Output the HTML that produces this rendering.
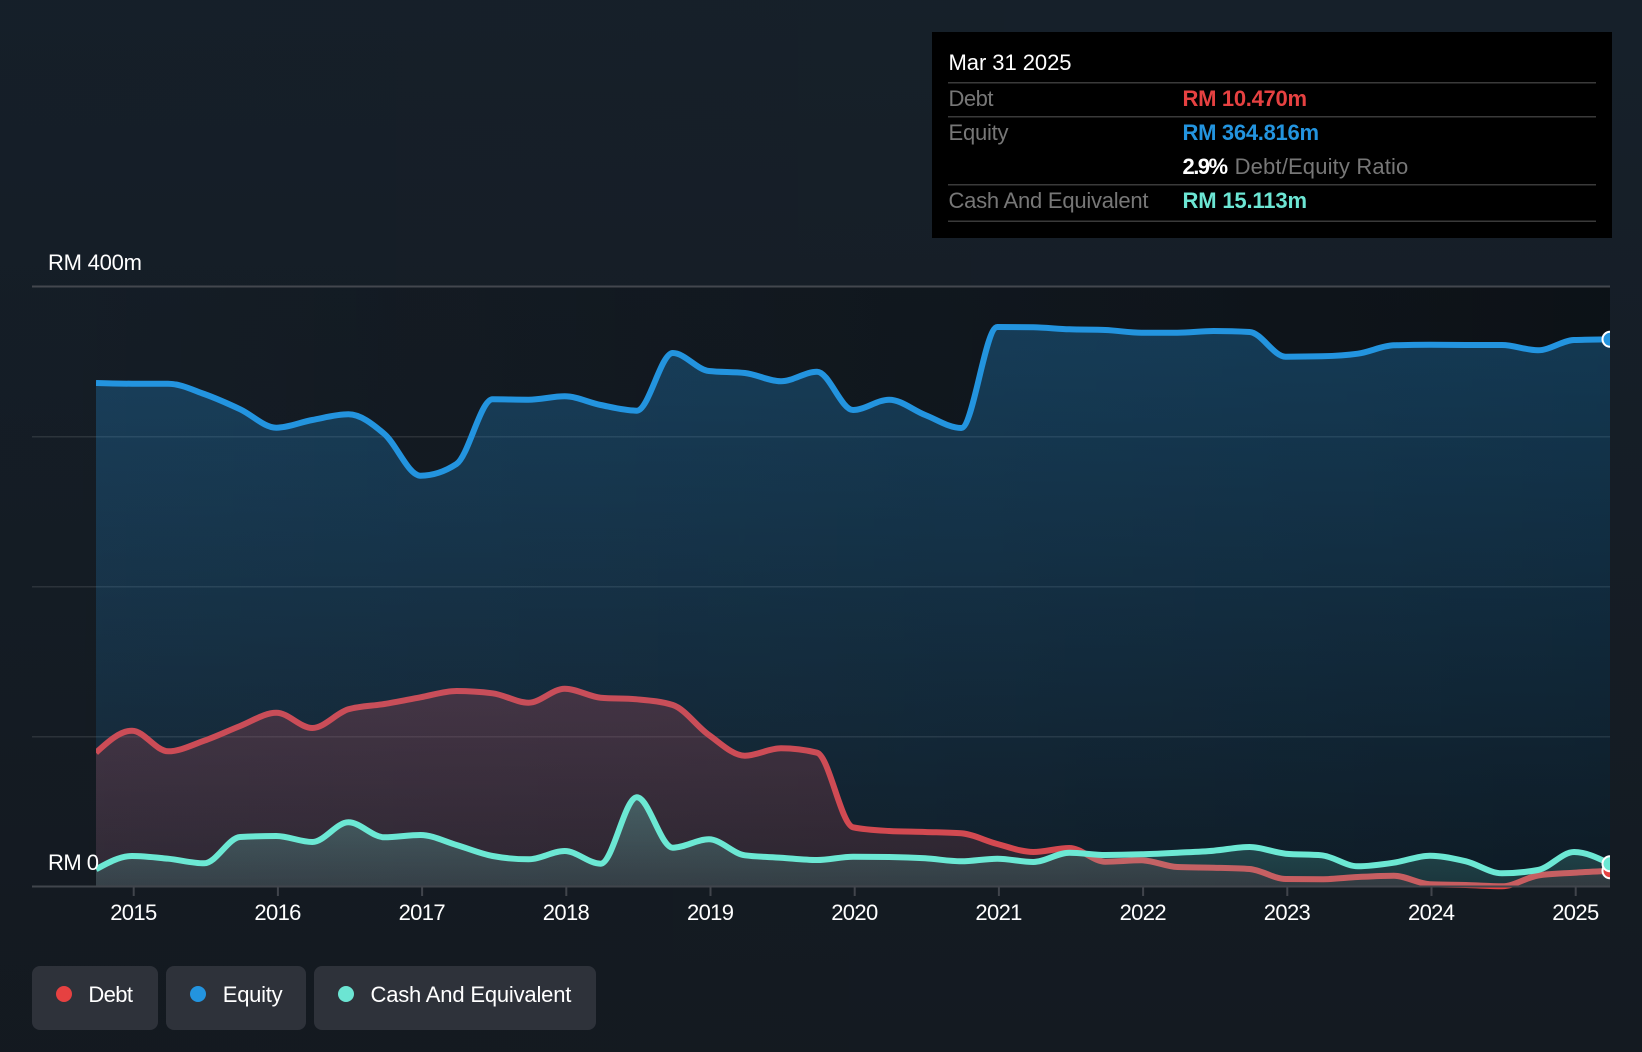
<!DOCTYPE html>
<html>
<head>
<meta charset="utf-8">
<title>Debt to Equity History</title>
<style>
html,body{margin:0;padding:0;width:1642px;height:1052px;overflow:hidden}
body{background:linear-gradient(90deg,rgba(0,0,0,.03),rgba(0,0,0,0)),linear-gradient(180deg,#16202a,#141a21)}
svg{display:block;position:absolute;left:0;top:0}
text{font-family:"Liberation Sans",Arial,sans-serif;font-size:22px}
</style>
</head>
<body>
<svg width="1642" height="1052" viewBox="0 0 1642 1052" xmlns="http://www.w3.org/2000/svg">
<defs>
<linearGradient id="plot" x1="0" y1="0" x2="1" y2="0"><stop offset="0" stop-color="#000" stop-opacity="0"/><stop offset="1" stop-color="#000" stop-opacity=".42"/></linearGradient>
<linearGradient id="ge" x1="0" y1="0" x2="0" y2="1"><stop offset="0" stop-color="#2394df" stop-opacity=".3"/><stop offset="1" stop-color="#2394df" stop-opacity=".08"/></linearGradient>
<linearGradient id="gd" x1="0" y1="0" x2="0" y2="1"><stop offset="0" stop-color="#e64141" stop-opacity=".26"/><stop offset="1" stop-color="#e64141" stop-opacity=".13"/></linearGradient>
<linearGradient id="gc" x1="0" y1="0" x2="0" y2="1"><stop offset="0" stop-color="#6ce5d3" stop-opacity=".27"/><stop offset="1" stop-color="#6ce5d3" stop-opacity=".13"/></linearGradient>
<clipPath id="clip"><rect x="96" y="280" width="1514" height="620"/></clipPath>
</defs>

<rect x="32" y="287" width="1578" height="600" fill="url(#plot)"/>
<rect x="32" y="285.5" width="1578" height="2" fill="#43474e"/>
<rect x="32" y="436" width="1578" height="1.5" fill="#fff" fill-opacity=".1"/>
<rect x="32" y="586" width="1578" height="1.5" fill="#fff" fill-opacity=".1"/>
<rect x="32" y="736" width="1578" height="1.5" fill="#fff" fill-opacity=".1"/>

<g clip-path="url(#clip)">
<path fill="url(#gd)" d="M96 752.7C108 741.7 120 730.7 132 730.7C144 730.7 156.1 751.3 168.1 751.3C180.1 751.3 192.2 744.9 204.2 740.7C216.2 736.5 228.2 730.7 240.2 726C252.2 721.3 264.3 712.7 276.3 712.7C288.3 712.7 300.3 728 312.3 728C324.3 728 336.4 712.8 348.4 709.3C360.4 705.8 372.4 706 384.4 704C396.4 702 408.5 699.5 420.5 697.3C432.5 695.1 444.5 691 456.5 691C468.5 691 480.6 691.8 492.6 693.3C504.6 694.8 516.6 702.7 528.6 702.7C540.6 702.7 552.7 688.7 564.7 688.7C576.7 688.7 588.7 696.6 600.7 697.7C612.7 698.8 624.8 698.2 636.8 699.3C648.8 700.4 660.8 701.2 672.8 705C684.8 708.8 696.9 726.6 708.9 735C720.9 743.5 732.9 755.7 744.9 755.7C756.9 755.7 769 748.3 781 748.3C793 748.3 805 749.8 817 752.7C829 755.6 841.1 824.8 853.1 827.3C865.1 829.8 877.1 830.3 889.1 831C901.1 831.7 913.2 831.6 925.2 832C937.2 832.4 949.2 832.4 961.2 833.3C973.2 834.2 985.3 840.9 997.3 844C1009.3 847.1 1021.3 852 1033.3 852C1045.3 852 1057.4 848 1069.4 848C1081.4 848 1093.4 861.7 1105.4 861.7C1117.4 861.7 1129.5 860.3 1141.5 860.3C1153.5 860.3 1165.5 866.5 1177.5 867C1189.5 867.5 1201.6 867.4 1213.6 867.7C1225.6 868 1237.6 868.1 1249.6 869C1261.6 869.9 1273.7 878.8 1285.7 879C1297.7 879.2 1309.7 879.3 1321.7 879.3C1333.7 879.3 1345.8 877.6 1357.8 877C1369.8 876.4 1381.8 875.7 1393.8 875.7C1405.8 875.7 1417.9 883.8 1429.9 884.3C1441.9 884.8 1453.9 884.7 1465.9 885C1477.9 885.3 1490 886.3 1502 886.3C1514 886.3 1526 877.4 1538 875.5C1550 873.6 1562.1 873.5 1574.1 872.7C1586.1 871.9 1598 871.4 1610 870.8L1610 886.5L96 886.5Z"/>
<path fill="none" stroke="#e64141" stroke-width="6" stroke-linejoin="round" d="M96 752.7C108 741.7 120 730.7 132 730.7C144 730.7 156.1 751.3 168.1 751.3C180.1 751.3 192.2 744.9 204.2 740.7C216.2 736.5 228.2 730.7 240.2 726C252.2 721.3 264.3 712.7 276.3 712.7C288.3 712.7 300.3 728 312.3 728C324.3 728 336.4 712.8 348.4 709.3C360.4 705.8 372.4 706 384.4 704C396.4 702 408.5 699.5 420.5 697.3C432.5 695.1 444.5 691 456.5 691C468.5 691 480.6 691.8 492.6 693.3C504.6 694.8 516.6 702.7 528.6 702.7C540.6 702.7 552.7 688.7 564.7 688.7C576.7 688.7 588.7 696.6 600.7 697.7C612.7 698.8 624.8 698.2 636.8 699.3C648.8 700.4 660.8 701.2 672.8 705C684.8 708.8 696.9 726.6 708.9 735C720.9 743.5 732.9 755.7 744.9 755.7C756.9 755.7 769 748.3 781 748.3C793 748.3 805 749.8 817 752.7C829 755.6 841.1 824.8 853.1 827.3C865.1 829.8 877.1 830.3 889.1 831C901.1 831.7 913.2 831.6 925.2 832C937.2 832.4 949.2 832.4 961.2 833.3C973.2 834.2 985.3 840.9 997.3 844C1009.3 847.1 1021.3 852 1033.3 852C1045.3 852 1057.4 848 1069.4 848C1081.4 848 1093.4 861.7 1105.4 861.7C1117.4 861.7 1129.5 860.3 1141.5 860.3C1153.5 860.3 1165.5 866.5 1177.5 867C1189.5 867.5 1201.6 867.4 1213.6 867.7C1225.6 868 1237.6 868.1 1249.6 869C1261.6 869.9 1273.7 878.8 1285.7 879C1297.7 879.2 1309.7 879.3 1321.7 879.3C1333.7 879.3 1345.8 877.6 1357.8 877C1369.8 876.4 1381.8 875.7 1393.8 875.7C1405.8 875.7 1417.9 883.8 1429.9 884.3C1441.9 884.8 1453.9 884.7 1465.9 885C1477.9 885.3 1490 886.3 1502 886.3C1514 886.3 1526 877.4 1538 875.5C1550 873.6 1562.1 873.5 1574.1 872.7C1586.1 871.9 1598 871.4 1610 870.8"/>

<path fill="url(#ge)" d="M96 383C108 383.4 120 383.7 132 383.7C144 383.7 156.1 383.7 168.1 383.7C180.1 383.7 192.2 389.7 204.2 394C216.2 398.3 228.2 403.7 240.2 409.3C252.2 414.9 264.3 427.7 276.3 427.7C288.3 427.7 300.3 422.2 312.3 420C324.3 417.8 336.4 414.3 348.4 414.3C360.4 414.3 372.4 423.8 384.4 434C396.4 444.2 408.5 475.7 420.5 475.7C432.5 475.7 444.5 471.8 456.5 464C468.5 456.2 480.6 399.3 492.6 399.3C504.6 399.3 516.6 399.7 528.6 399.7C540.6 399.7 552.7 396.3 564.7 396.3C576.7 396.3 588.7 402.6 600.7 405C612.7 407.4 624.8 410.7 636.8 410.7C648.8 410.7 660.8 353 672.8 353C684.8 353 696.9 369.7 708.9 371C720.9 372.3 732.9 371.7 744.9 373C756.9 374.3 769 381.3 781 381.3C793 381.3 805 371.7 817 371.7C829 371.7 841.1 410 853.1 410C865.1 410 877.1 399.7 889.1 399.7C901.1 399.7 913.2 410.3 925.2 415C937.2 419.7 949.2 428 961.2 428C973.2 428 985.3 327 997.3 327C1009.3 327 1021.3 327.1 1033.3 327.3C1045.3 327.5 1057.4 328.9 1069.4 329.3C1081.4 329.8 1093.4 329.5 1105.4 330C1117.4 330.5 1129.5 332.7 1141.5 332.7C1153.5 332.7 1165.5 332.7 1177.5 332.7C1189.5 332.7 1201.6 331 1213.6 331C1225.6 331 1237.6 331.3 1249.6 332C1261.6 332.7 1273.7 356.7 1285.7 356.7C1297.7 356.7 1309.7 356.6 1321.7 356.3C1333.7 356 1345.8 355.4 1357.8 353.7C1369.8 352 1381.8 345.7 1393.8 345.3C1405.8 344.9 1417.9 344.7 1429.9 344.7C1441.9 344.7 1453.9 345 1465.9 345C1477.9 345 1490 345 1502 345C1514 345 1526 350.3 1538 350.3C1550 350.3 1562.1 340.5 1574.1 340C1586.1 339.5 1598 339.5 1610 339.3L1610 886.5L96 886.5Z"/>
<path fill="none" stroke="#2394df" stroke-width="6" stroke-linejoin="round" d="M96 383C108 383.4 120 383.7 132 383.7C144 383.7 156.1 383.7 168.1 383.7C180.1 383.7 192.2 389.7 204.2 394C216.2 398.3 228.2 403.7 240.2 409.3C252.2 414.9 264.3 427.7 276.3 427.7C288.3 427.7 300.3 422.2 312.3 420C324.3 417.8 336.4 414.3 348.4 414.3C360.4 414.3 372.4 423.8 384.4 434C396.4 444.2 408.5 475.7 420.5 475.7C432.5 475.7 444.5 471.8 456.5 464C468.5 456.2 480.6 399.3 492.6 399.3C504.6 399.3 516.6 399.7 528.6 399.7C540.6 399.7 552.7 396.3 564.7 396.3C576.7 396.3 588.7 402.6 600.7 405C612.7 407.4 624.8 410.7 636.8 410.7C648.8 410.7 660.8 353 672.8 353C684.8 353 696.9 369.7 708.9 371C720.9 372.3 732.9 371.7 744.9 373C756.9 374.3 769 381.3 781 381.3C793 381.3 805 371.7 817 371.7C829 371.7 841.1 410 853.1 410C865.1 410 877.1 399.7 889.1 399.7C901.1 399.7 913.2 410.3 925.2 415C937.2 419.7 949.2 428 961.2 428C973.2 428 985.3 327 997.3 327C1009.3 327 1021.3 327.1 1033.3 327.3C1045.3 327.5 1057.4 328.9 1069.4 329.3C1081.4 329.8 1093.4 329.5 1105.4 330C1117.4 330.5 1129.5 332.7 1141.5 332.7C1153.5 332.7 1165.5 332.7 1177.5 332.7C1189.5 332.7 1201.6 331 1213.6 331C1225.6 331 1237.6 331.3 1249.6 332C1261.6 332.7 1273.7 356.7 1285.7 356.7C1297.7 356.7 1309.7 356.6 1321.7 356.3C1333.7 356 1345.8 355.4 1357.8 353.7C1369.8 352 1381.8 345.7 1393.8 345.3C1405.8 344.9 1417.9 344.7 1429.9 344.7C1441.9 344.7 1453.9 345 1465.9 345C1477.9 345 1490 345 1502 345C1514 345 1526 350.3 1538 350.3C1550 350.3 1562.1 340.5 1574.1 340C1586.1 339.5 1598 339.5 1610 339.3"/>
</g>

<rect x="32" y="885.5" width="1578" height="2" fill="#41454c"/>
<g fill="#41454c">
<rect x="132.7" y="886" width="2" height="10"/><rect x="276.9" y="886" width="2" height="10"/><rect x="421.1" y="886" width="2" height="10"/><rect x="565.3" y="886" width="2" height="10"/><rect x="709.5" y="886" width="2" height="10"/><rect x="853.7" y="886" width="2" height="10"/><rect x="997.9" y="886" width="2" height="10"/><rect x="1142.1" y="886" width="2" height="10"/><rect x="1286.3" y="886" width="2" height="10"/><rect x="1430.5" y="886" width="2" height="10"/><rect x="1574.7" y="886" width="2" height="10"/>
</g>

<g clip-path="url(#clip)">
<path fill="url(#gc)" d="M96 869.3C108 862.7 120 856 132 856C144 856 156.1 857.5 168.1 858.7C180.1 859.9 192.2 863.3 204.2 863.3C216.2 863.3 228.2 837.7 240.2 837C252.2 836.3 264.3 836 276.3 836C288.3 836 300.3 842 312.3 842C324.3 842 336.4 822.3 348.4 822.3C360.4 822.3 372.4 837.3 384.4 837.3C396.4 837.3 408.5 835 420.5 835C432.5 835 444.5 841.5 456.5 845C468.5 848.5 480.6 853.8 492.6 856C504.6 858.2 516.6 859.3 528.6 859.3C540.6 859.3 552.7 851 564.7 851C576.7 851 588.7 863.7 600.7 863.7C612.7 863.7 624.8 797.3 636.8 797.3C648.8 797.3 660.8 847.7 672.8 847.7C684.8 847.7 696.9 839.3 708.9 839.3C720.9 839.3 732.9 853.7 744.9 855.3C756.9 856.9 769 856.9 781 857.7C793 858.5 805 860 817 860C829 860 841.1 856.7 853.1 856.7C865.1 856.7 877.1 856.8 889.1 857C901.1 857.2 913.2 857.6 925.2 858.3C937.2 859 949.2 861.3 961.2 861.3C973.2 861.3 985.3 858.7 997.3 858.7C1009.3 858.7 1021.3 862 1033.3 862C1045.3 862 1057.4 852.7 1069.4 852.7C1081.4 852.7 1093.4 855 1105.4 855C1117.4 855 1129.5 854.7 1141.5 854.3C1153.5 853.9 1165.5 853.3 1177.5 852.7C1189.5 852.1 1201.6 851.7 1213.6 850.7C1225.6 849.7 1237.6 847 1249.6 847C1261.6 847 1273.7 852.6 1285.7 853.7C1297.7 854.8 1309.7 854.2 1321.7 855.3C1333.7 856.4 1345.8 866.3 1357.8 866.3C1369.8 866.3 1381.8 864.5 1393.8 862.7C1405.8 860.9 1417.9 855.7 1429.9 855.7C1441.9 855.7 1453.9 858.4 1465.9 861.3C1477.9 864.2 1490 873.3 1502 873.3C1514 873.3 1526 872.2 1538 870C1550 867.8 1562.1 852 1574.1 852C1586.1 852 1598 857.9 1610 863.8L1610 885.5L96 885.5Z"/>
<path fill="none" stroke="#6ce8d4" stroke-width="6" stroke-linejoin="round" d="M96 869.3C108 862.7 120 856 132 856C144 856 156.1 857.5 168.1 858.7C180.1 859.9 192.2 863.3 204.2 863.3C216.2 863.3 228.2 837.7 240.2 837C252.2 836.3 264.3 836 276.3 836C288.3 836 300.3 842 312.3 842C324.3 842 336.4 822.3 348.4 822.3C360.4 822.3 372.4 837.3 384.4 837.3C396.4 837.3 408.5 835 420.5 835C432.5 835 444.5 841.5 456.5 845C468.5 848.5 480.6 853.8 492.6 856C504.6 858.2 516.6 859.3 528.6 859.3C540.6 859.3 552.7 851 564.7 851C576.7 851 588.7 863.7 600.7 863.7C612.7 863.7 624.8 797.3 636.8 797.3C648.8 797.3 660.8 847.7 672.8 847.7C684.8 847.7 696.9 839.3 708.9 839.3C720.9 839.3 732.9 853.7 744.9 855.3C756.9 856.9 769 856.9 781 857.7C793 858.5 805 860 817 860C829 860 841.1 856.7 853.1 856.7C865.1 856.7 877.1 856.8 889.1 857C901.1 857.2 913.2 857.6 925.2 858.3C937.2 859 949.2 861.3 961.2 861.3C973.2 861.3 985.3 858.7 997.3 858.7C1009.3 858.7 1021.3 862 1033.3 862C1045.3 862 1057.4 852.7 1069.4 852.7C1081.4 852.7 1093.4 855 1105.4 855C1117.4 855 1129.5 854.7 1141.5 854.3C1153.5 853.9 1165.5 853.3 1177.5 852.7C1189.5 852.1 1201.6 851.7 1213.6 850.7C1225.6 849.7 1237.6 847 1249.6 847C1261.6 847 1273.7 852.6 1285.7 853.7C1297.7 854.8 1309.7 854.2 1321.7 855.3C1333.7 856.4 1345.8 866.3 1357.8 866.3C1369.8 866.3 1381.8 864.5 1393.8 862.7C1405.8 860.9 1417.9 855.7 1429.9 855.7C1441.9 855.7 1453.9 858.4 1465.9 861.3C1477.9 864.2 1490 873.3 1502 873.3C1514 873.3 1526 872.2 1538 870C1550 867.8 1562.1 852 1574.1 852C1586.1 852 1598 857.9 1610 863.8"/>
<circle cx="1610" cy="339.3" r="7.5" fill="#2394df" stroke="#fff" stroke-width="2"/>
<circle cx="1610" cy="870.8" r="7.5" fill="#e64141" stroke="#fff" stroke-width="2"/>
<circle cx="1610" cy="863.8" r="7.5" fill="#6ce8d4" stroke="#fff" stroke-width="2"/>
</g>

<text x="48" y="270" fill="#fff" textLength="94">RM 400m</text>
<text x="48" y="870" fill="#fff" textLength="51">RM 0</text>

<g fill="#fff" text-anchor="middle">
<text x="133.7" y="920" textLength="47">2015</text><text x="277.9" y="920" textLength="47">2016</text><text x="422.1" y="920" textLength="47">2017</text><text x="566.3" y="920" textLength="47">2018</text><text x="710.5" y="920" textLength="47">2019</text><text x="854.7" y="920" textLength="47">2020</text><text x="998.9" y="920" textLength="47">2021</text><text x="1143.1" y="920" textLength="47">2022</text><text x="1287.3" y="920" textLength="47">2023</text><text x="1431.5" y="920" textLength="47">2024</text><text x="1575.7" y="920" textLength="47">2025</text>
</g>

<rect x="932" y="32" width="680" height="206" fill="#000"/>
<g fill="#3a3a3a">
<rect x="948" y="82" width="648" height="1.5"/>
<rect x="948" y="116" width="648" height="1.5"/>
<rect x="948" y="184" width="648" height="1.5"/>
<rect x="948" y="220.5" width="648" height="1.5"/>
</g>
<text x="948.5" y="70" fill="#fff" textLength="123">Mar 31 2025</text>
<text x="948.5" y="106" fill="#777" textLength="45">Debt</text>
<text x="948.5" y="140" fill="#777" textLength="60">Equity</text>
<text x="948.5" y="208" fill="#777" textLength="200">Cash And Equivalent</text>
<text x="1182.5" y="106" fill="#e64141" font-weight="bold" textLength="124.5">RM 10.470m</text>
<text x="1182.5" y="140" fill="#2394df" font-weight="bold" textLength="136.5">RM 364.816m</text>
<text x="1182.5" y="174" fill="#fff" font-weight="bold" textLength="45.5">2.9%</text>
<text x="1234.6" y="174" fill="#777" textLength="173.7">Debt/Equity Ratio</text>
<text x="1182.5" y="208" fill="#6ce5d3" font-weight="bold" textLength="124.5">RM 15.113m</text>

<rect x="32" y="966" width="126" height="64" rx="8" fill="#2e323a"/>
<rect x="166" y="966" width="140" height="64" rx="8" fill="#2e323a"/>
<rect x="314" y="966" width="282" height="64" rx="8" fill="#2e323a"/>
<circle cx="64" cy="994" r="8" fill="#e64141"/>
<circle cx="198" cy="994" r="8" fill="#2394df"/>
<circle cx="346" cy="994" r="8" fill="#6ce5d3"/>
<text x="88.4" y="1002" fill="#fff" textLength="44.6">Debt</text>
<text x="222.8" y="1002" fill="#fff" textLength="59.8">Equity</text>
<text x="370.5" y="1002" fill="#fff" textLength="200.9">Cash And Equivalent</text>
</svg>
</body>
</html>
